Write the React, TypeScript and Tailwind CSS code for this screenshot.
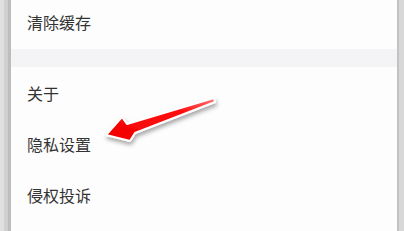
import React from 'react'

const rows = ['关于', '隐私设置', '侵权投诉']

function Arrow() {
  return (
    <svg className="absolute left-0 top-0 pointer-events-none" width="404" height="231" viewBox="0 0 404 231">
      <defs>
        <linearGradient id="arrowFill" x1="1" y1="0" x2="0" y2="1">
          <stop offset="0" stopColor="#ff7a7a" />
          <stop offset="0.3" stopColor="#ff1010" />
          <stop offset="1" stopColor="#f00000" />
        </linearGradient>
        <filter id="arrowShadow" x="-20%" y="-40%" width="140%" height="180%">
          <feDropShadow dx="1" dy="3" stdDeviation="2" floodColor="#000" floodOpacity="0.35" />
        </filter>
      </defs>
      <polygon
        points="106,135 122,117 127,124 214,98 215,102 135,133 130,141"
        fill="url(#arrowFill)"
        stroke="#fff"
        strokeWidth="2"
        strokeLinejoin="round"
        filter="url(#arrowShadow)"
      />
    </svg>
  )
}

export default function App() {
  return (
    <div
      className="relative flex h-[231px] w-[404px] overflow-hidden bg-[#fdfdfd] text-[#333]"
      style={{ fontFamily: '"Noto Sans CJK SC", "Noto Sans", sans-serif' }}
    >
      {/* left edge strip */}
      <div className="flex w-[11px] shrink-0">
        <div className="w-[4px] bg-[#e0e0e0]" />
        <div className="w-[4px] bg-[#d0d0d0]" />
        <div className="w-[3px] bg-[#bdbdbd]" />
      </div>

      <div className="flex-1 flex flex-col">
        <div className="h-[49px] flex items-center pl-[16px] pb-[5px] text-[16px]">清除缓存</div>
        <div className="h-[18px] bg-[#f4f3f6]" />
        <div className="flex flex-col">
          {rows.map((label) => (
            <div key={label} className="h-[51px] flex items-center pl-[16px] text-[16px]">
              {label}
            </div>
          ))}
        </div>
      </div>

      {/* right edge strip */}
      <div className="flex w-[7px] shrink-0">
        <div className="w-[2px] bg-[#c2c2c2]" />
        <div className="w-[5px] bg-[#d8d8d8]" />
      </div>

      <Arrow />
    </div>
  )
}
